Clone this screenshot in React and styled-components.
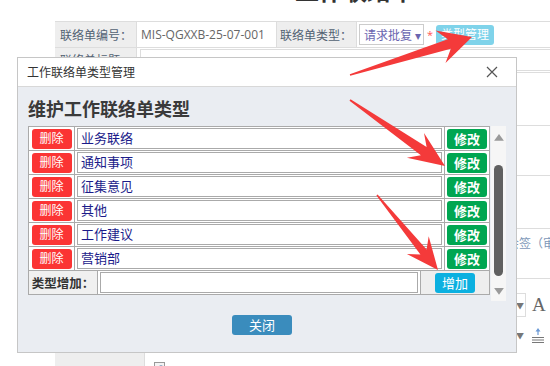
import React from 'react';
import styled, { createGlobalStyle } from 'styled-components';

const GlobalStyle = createGlobalStyle`
    html, body {
        margin: 0;
        padding: 0;
        background: #fff;
        font-family: "Open Sans", "Noto Sans CJK SC", sans-serif;
    }
`;

const Page = styled.div`
    position: relative;
    width: 550px;
    height: 366px;
    overflow: hidden;
`;

const PageTitle = styled.div`
    height: 8px;
    overflow: hidden;
    padding-left: 295px;

    > span {
        display: block;
        margin-top: -24px;
        font-size: 24px;
        line-height: 28px;
        font-weight: bold;
        color: #333;
        font-family: "Noto Sans CJK SC", sans-serif;
    }
`;

const Form = styled.div`
    margin: 13px 0 0 55px;
    width: 520px;
    border-top: 1px solid #ddd;
`;

const FormRow = styled.div`
    display: flex;
    height: ${(p) => p.h}px;
    border-bottom: 1px solid #ddd;
`;

const Label = styled.div`
    width: ${(p) => p.w || 82}px;
    flex-shrink: 0;
    background: #eee;
    border-right: 1px solid #ddd;
    box-sizing: border-box;
    display: flex;
    align-items: center;
    justify-content: flex-end;
    padding-right: 4px;
    font-size: 12px;
    white-space: nowrap;
    color: #526273;
`;

const Value = styled.div`
    width: ${(p) => (p.w ? p.w + 'px' : 'auto')};
    flex: ${(p) => (p.w ? '0 0 auto' : '1')};
    box-sizing: border-box;
    display: flex;
    flex-direction: ${(p) => p.dir || 'row'};
    align-items: ${(p) => p.align || 'center'};
    gap: 3px;
    padding-left: ${(p) => p.pl ?? 4}px;
    font-size: 12px;
    white-space: nowrap;
    color: #666;
    border-right: 1px solid #ddd;
`;

const SelectBox = styled.div`
    width: 65px;
    height: 21px;
    box-sizing: border-box;
    border: 1px solid #ccc;
    font-size: 12px;
    color: #6a66b0;
    display: flex;
    align-items: center;
    padding-left: 4px;
    overflow: hidden;
`;

const Star = styled.span`
    color: #f55;
    font-size: 11px;
`;

const TypeButton = styled.div`
    height: 20px;
    padding: 0 5px;
    background: #7fd3ea;
    color: #fff;
    border-radius: 3px;
    font-size: 12px;
    line-height: 20px;
`;

const FormInput = styled.div`
    flex: 1;
    height: 20px;
    border: 1px solid #ddd;
    margin-right: 2px;
`;

const HintText = styled.span`
    color: #7d97b8;
    padding-top: 5px;
`;

const ToolBar = styled.div`
    display: flex;
    align-items: center;
    gap: 6px;
    margin-top: ${(p) => p.mt}px;
`;

const ToolSelect = styled.div`
    width: 20px;
    height: 22px;
    border: ${(p) => (p.plain ? 'none' : '1px solid #ddd')};
    border-left: none;
    color: #777;
    font-size: 8px;
    display: flex;
    align-items: center;
    justify-content: flex-end;
    padding-right: 1px;
`;

const Tool = styled.span`
    font-family: "Liberation Serif", serif;
    font-size: 19px;
    color: #666;
`;

const Dialog = styled.div`
    position: absolute;
    left: 17px;
    top: 57px;
    width: 500px;
    height: 296px;
    box-sizing: border-box;
    border: 1px solid #c6c6c6;
    background: #eaedf2;
    display: flex;
    flex-direction: column;
`;

const DialogHeader = styled.div`
    height: 28px;
    background: #fff;
    border-bottom: 1px solid #d8d8d8;
    display: flex;
    align-items: center;
    justify-content: space-between;
    padding: 0 18px 0 9px;
    font-size: 12px;
    color: #333;
`;

const DialogBody = styled.div`
    padding: 9px 10px 0 10px;
    display: flex;
    flex-direction: column;
`;

const Heading = styled.div`
    font-size: 18px;
    line-height: 24px;
    font-weight: bold;
    color: #3a3a3a;
    font-family: "Noto Sans CJK SC", sans-serif;
    margin-bottom: 6px;
`;

const ScrollArea = styled.div`
    display: flex;
    gap: 1px;
    height: 175px;
`;

const Table = styled.div`
    width: 462px;
    box-sizing: border-box;
    border-left: 1px solid #aaa;
    border-top: 1px solid #aaa;
    background: #fff;
    align-self: flex-start;
`;

const Row = styled.div`
    display: grid;
    grid-template-columns: ${(p) => p.cols};
    height: 24px;
`;

const Cell = styled.div`
    border-right: 1px solid #aaa;
    border-bottom: 1px solid #aaa;
    background: ${(p) => p.bg || '#fff'};
    display: flex;
    align-items: center;
    justify-content: center;
    padding: 0 2px;
    min-width: 0;
    white-space: nowrap;
    overflow: hidden;
`;

const ActionButton = styled.div`
    width: 40px;
    height: 20px;
    border-radius: 3px;
    background: ${(p) => p.bg};
    color: #fff;
    font-size: ${(p) => p.fs || 13}px;
    font-weight: ${(p) => p.fw || 'normal'};
    line-height: 20px;
    text-align: center;
`;

const TypeInput = styled.div`
    flex: 1;
    height: 21px;
    box-sizing: border-box;
    border: 1px solid #aaa;
    font-size: 13px;
    line-height: 19px;
    padding-left: 3px;
    color: #1b1b8a;
`;

const AddLabel = styled.span`
    font-size: 12.5px;
    font-weight: bold;
    color: #333;
`;

const ScrollBar = styled.div`
    width: 15px;
    background: #f6f6f6;
    display: flex;
    flex-direction: column;
    align-items: center;
    padding: 8px 0 6px;
    box-sizing: border-box;
`;

const Thumb = styled.div`
    width: 9px;
    height: 114px;
    border-radius: 5px;
    background: #606060;
    margin: 24px 0 12px;
`;

const Footer = styled.div`
    display: flex;
    justify-content: center;
    margin-top: 14px;
    padding-right: 10px;
`;

const CloseButton = styled.div`
    width: 60px;
    height: 20px;
    border-radius: 3px;
    background: #3a8cbd;
    color: #fff;
    font-size: 13px;
    line-height: 20px;
    text-align: center;
`;

const Overlay = styled.svg`
    position: absolute;
    left: 0;
    top: 0;
    pointer-events: none;
`;

const Triangle = ({ up }) => (
    <svg width="10" height="7" viewBox="0 0 10 7">
        <polygon points={up ? '5,0 10,7 0,7' : '0,0 10,0 5,7'} fill="#9a9a9a" />
    </svg>
);

const AlignIcon = () => (
    <svg width="14" height="16" viewBox="0 0 14 16">
        <path d="M7 1 L4.5 4.5 H6.4 V8 H7.6 V4.5 H9.5 Z" fill="#6c9ad6" />
        <path d="M1 10.5 H13 M1 13 H13 M1 15.5 H13" stroke="#777" strokeWidth="1" />
    </svg>
);

const FileIcon = () => (
    <svg width="14" height="14" viewBox="0 0 14 14">
        <rect x="1.5" y="1.5" width="10" height="11" fill="#f4f4f4" stroke="#999" />
        <circle cx="8" cy="8" r="3.2" fill="#8ab4d8" stroke="#5a86b0" />
    </svg>
);

const arrowPoints = (x1, y1, x2, y2, head, hw, nw) => {
    const dx = x2 - x1;
    const dy = y2 - y1;
    const len = Math.hypot(dx, dy);
    const ux = dx / len;
    const uy = dy / len;
    const px = -uy;
    const py = ux;
    const bx = x2 - ux * head;
    const by = y2 - uy * head;
    const nx = x2 - ux * head * 0.72;
    const ny = y2 - uy * head * 0.72;
    const pts = [
        [x1 + px * 0.8, y1 + py * 0.8],
        [nx + px * nw, ny + py * nw],
        [bx + px * hw, by + py * hw],
        [x2, y2],
        [bx - px * hw, by - py * hw],
        [nx - px * nw, ny - py * nw],
        [x1 - px * 0.8, y1 - py * 0.8],
    ];
    return pts.map((p) => p.map((v) => v.toFixed(1)).join(',')).join(' ');
};

const types = ['业务联络', '通知事项', '征集意见', '其他', '工作建议', '营销部'];

export default function App() {
    return (
        <Page>
            <GlobalStyle />
            <PageTitle>
                <span>工作联络单</span>
            </PageTitle>
            <Form>
                <FormRow h={25}>
                    <Label>联络单编号：</Label>
                    <Value w={140}>MIS-QGXXB-25-07-001</Value>
                    <Label w={80}>联络单类型：</Label>
                    <Value pl={2}>
                        <SelectBox>请求批复 ▾</SelectBox>
                        <Star>*</Star>
                        <TypeButton>类型管理</TypeButton>
                    </Value>
                </FormRow>
                <FormRow h={24}>
                    <Label>联络单标题：</Label>
                    <Value pl={3}>
                        <FormInput />
                    </Value>
                </FormRow>
                <FormRow h={52} />
                <FormRow h={49} />
                <FormRow h={52} />
                <FormRow h={49}>
                    <Label />
                    <Value pl={370} align="flex-start">
                        <HintText>会签（审核）</HintText>
                    </Value>
                </FormRow>
                <FormRow h={110}>
                    <Label w={90} />
                    <Value pl={359} dir="column" align="flex-start">
                        <ToolBar mt={14}>
                            <ToolSelect>▼</ToolSelect>
                            <Tool>A</Tool>
                            <ToolSelect plain>▼</ToolSelect>
                        </ToolBar>
                        <ToolBar mt={4}>
                            <ToolSelect plain>▼</ToolSelect>
                            <AlignIcon />
                        </ToolBar>
                        <ToolBar mt={12} style={{ marginLeft: -351 }}>
                            <FileIcon />
                        </ToolBar>
                    </Value>
                </FormRow>
            </Form>

            <Dialog>
                <DialogHeader>
                    <span>工作联络单类型管理</span>
                    <svg width="12" height="12" viewBox="0 0 12 12">
                        <path d="M1 1 L11 11 M11 1 L1 11" stroke="#555" strokeWidth="1.2" />
                    </svg>
                </DialogHeader>
                <DialogBody>
                    <Heading>维护工作联络单类型</Heading>
                    <ScrollArea>
                        <Table>
                            {types.map((t) => (
                                <Row key={t} cols="46px 370px 45px">
                                    <Cell>
                                        <ActionButton bg="#fb3434" fs={12}>删除</ActionButton>
                                    </Cell>
                                    <Cell>
                                        <TypeInput>{t}</TypeInput>
                                    </Cell>
                                    <Cell>
                                        <ActionButton bg="#00a651" fw="bold">修改</ActionButton>
                                    </Cell>
                                </Row>
                            ))}
                            <Row cols="69px 323px 69px">
                                <Cell bg="#f0f0f0">
                                    <AddLabel>类型增加：</AddLabel>
                                </Cell>
                                <Cell>
                                    <TypeInput />
                                </Cell>
                                <Cell bg="#eee">
                                    <ActionButton bg="#0bb0e0">增加</ActionButton>
                                </Cell>
                            </Row>
                        </Table>
                        <ScrollBar>
                            <Triangle up />
                            <Thumb />
                            <Triangle />
                        </ScrollBar>
                    </ScrollArea>
                    <Footer>
                        <CloseButton>关闭</CloseButton>
                    </Footer>
                </DialogBody>
            </Dialog>

            <Overlay width="550" height="366" viewBox="0 0 550 366">
                <polygon points={arrowPoints(350, 75, 472, 37, 33, 17, 5)} fill="#f43a3a" />
                <polygon points={arrowPoints(350, 100, 445, 166, 36, 15, 5)} fill="#f43a3a" />
                <polygon points={arrowPoints(377, 195, 438, 270, 32, 14, 4)} fill="#f43a3a" />
            </Overlay>
        </Page>
    );
}
